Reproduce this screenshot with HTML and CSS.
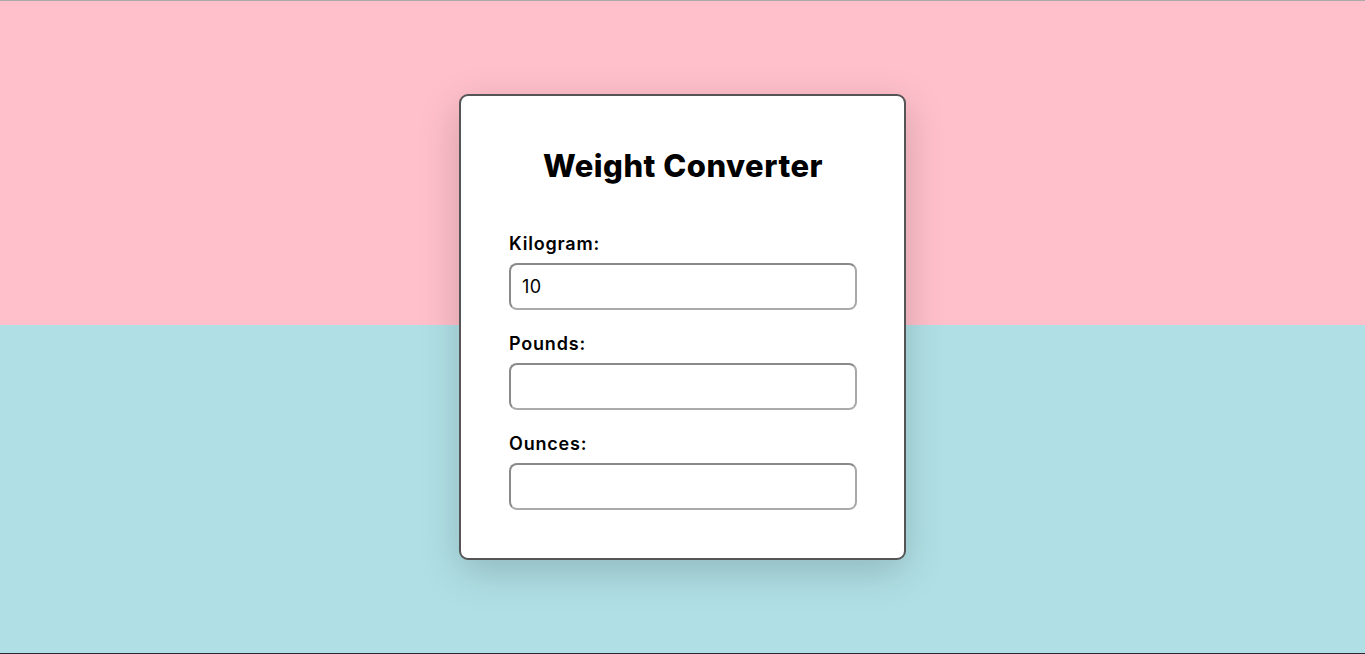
FILE: index.html
```html
<!DOCTYPE html>
<html lang="en">
<head>
<meta charset="utf-8">
<title>Weight Converter</title>
<link rel="stylesheet" href="styles.css">
</head>
<body>
<main class="page">
  <section class="card">
    <h1 class="title">Weight Converter</h1>
    <div class="field">
      <label class="label" for="kg">Kilogram:</label>
      <input class="input" id="kg" type="text" value="10">
    </div>
    <div class="field">
      <label class="label" for="lb">Pounds:</label>
      <input class="input" id="lb" type="text">
    </div>
    <div class="field">
      <label class="label" for="oz">Ounces:</label>
      <input class="input" id="oz" type="text">
    </div>
  </section>
</main>
</body>
</html>
```
FILE: styles.css
```css
* { box-sizing: border-box; }
html, body { margin: 0; padding: 0; height: 100%; }
body {
  font-family: "Inter", "Noto Sans", sans-serif;
  background: linear-gradient(to bottom, #ffc0cb 0, #ffc0cb 325px, #b0e0e6 325px, #b0e0e6 100%);
  border-top: 1px solid #a9a9a9;
  border-bottom: 1px solid #2e2836;
  overflow: hidden;
}
.page {
  height: 100%;
  display: flex;
  justify-content: center;
  padding-top: 93px;
}
.card {
  width: 447px;
  height: 466px;
  background: #fff;
  border: 2px solid #555;
  border-radius: 9px;
  padding: 49px 47px 47px 48px;
  box-shadow: 0 12px 40px rgba(0, 0, 0, 0.18);
}
.title {
  margin: 0 0 45px;
  font-size: 31px;
  line-height: 42px;
  font-weight: 800;
  text-align: center;
  color: #000;
  letter-spacing: 0.5px;
}
.field { display: flex; flex-direction: column; margin-bottom: 22px; }
.field:last-child { margin-bottom: 0; }
.label {
  font-size: 18px;
  line-height: 24px;
  font-weight: 600;
  color: #000;
  margin-bottom: 7px;
  letter-spacing: 0.8px;
}
.input {
  width: 348px;
  height: 47px;
  border: 2px solid;
  border-color: #8a8a8a #a8a8a8 #ababab #8a8a8a;
  border-radius: 8px;
  padding: 0 11px;
  font-family: "Inter", "Noto Sans", sans-serif;
  font-size: 18px;
  color: #000;
  background: #fff;
  outline: none;
  letter-spacing: 0.4px;
}
```
